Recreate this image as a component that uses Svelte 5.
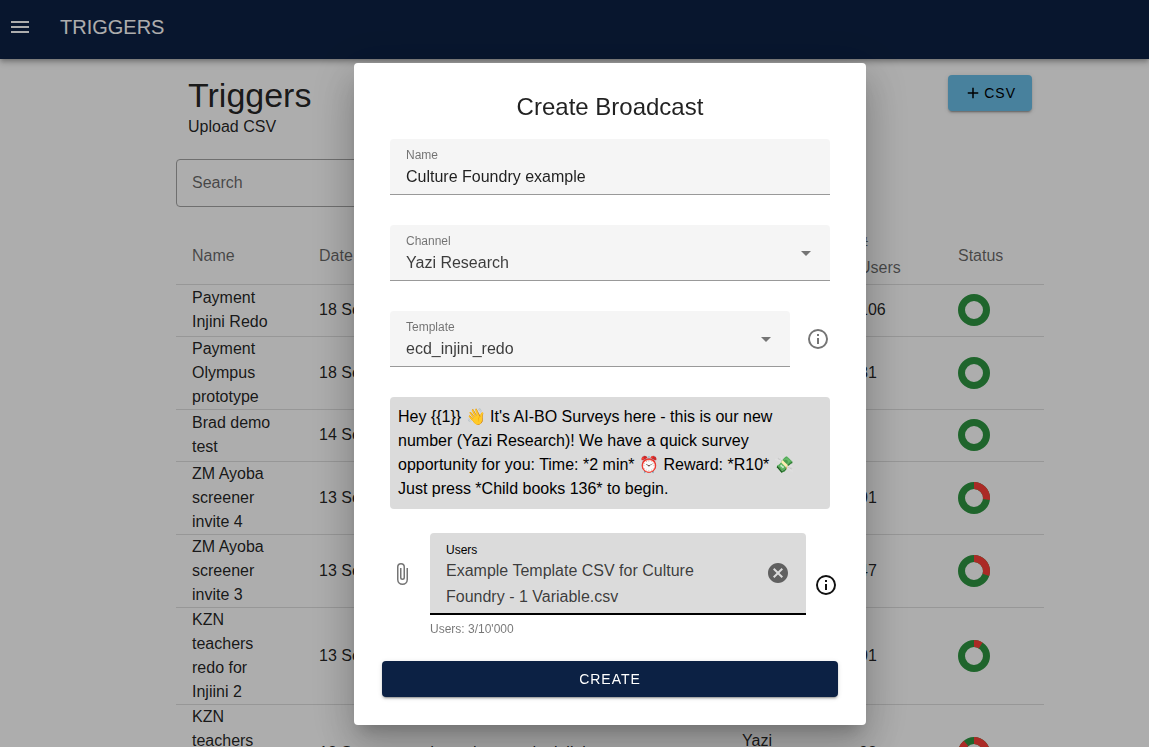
<script lang="ts">
    const icons = {
        menu: 'M3,6H21V8H3V6M3,11H21V13H3V11M3,16H21V18H3V16Z',
        plus: 'M19,13H13V19H11V13H5V11H11V5H13V11H19V13Z',
        down: 'M7,10L12,15L17,10H7Z',
        info: 'M11,9H13V7H11M12,20C7.59,20 4,16.41 4,12C4,7.59 7.59,4 12,4C16.41,4 20,7.59 20,12C20,16.41 16.41,20 12,20M12,2A10,10 0 0,0 2,12A10,10 0 0,0 12,22A10,10 0 0,0 22,12A10,10 0 0,0 12,2M11,17H13V11H11V17Z',
        clip: 'M16.5,6V17.5A4,4 0 0,1 12.5,21.5A4,4 0 0,1 8.5,17.5V5A2.5,2.5 0 0,1 11,2.5A2.5,2.5 0 0,1 13.5,5V15.5A1,1 0 0,1 12.5,16.5A1,1 0 0,1 11.5,15.5V6H10V15.5A2.5,2.5 0 0,0 12.5,18A2.5,2.5 0 0,0 15,15.5V5A4,4 0 0,0 11,1A4,4 0 0,0 7,5V17.5A5.5,5.5 0 0,0 12.5,23A5.5,5.5 0 0,0 18,17.5V6H16.5Z',
        clear: 'M12,2C17.53,2 22,6.47 22,12C22,17.53 17.53,22 12,22C6.47,22 2,17.53 2,12C2,6.47 6.47,2 12,2M15.59,7L12,10.59L8.41,7L7,8.41L10.59,12L7,15.59L8.41,17L12,13.41L15.59,17L17,15.59L13.41,12L17,8.41L15.59,7Z',
    };

    const triggers = [
        { name: 'Payment Injini Redo', date: '18 Sept', template: 'ecd_injini_redo', channel: 'Yazi', users: 106, failed: 0 },
        { name: 'Payment Olympus prototype', date: '18 Sept', template: 'olympus_payment', channel: 'Yazi', users: 31, failed: 0 },
        { name: 'Brad demo test', date: '14 Sept', template: 'demo_test', channel: 'Yazi', users: null, failed: 0 },
        { name: 'ZM Ayoba screener invite 4', date: '13 Sept', template: 'ayoba_screener', channel: 'Yazi', users: 91, failed: 27 },
        { name: 'ZM Ayoba screener invite 3', date: '13 Sept', template: 'ayoba_screener', channel: 'Yazi', users: 47, failed: 30 },
        { name: 'KZN teachers redo for Injiini 2', date: '13 Sept', template: 'ecd_teachers_redo_injini', channel: 'Yazi Research', users: 91, failed: 9 },
        { name: 'KZN teachers redo for Injiini', date: '13 Sept', template: 'ecd_teachers_redo_injini', channel: 'Yazi Research', users: 98, failed: 89 },
    ];

    let search = $state('');
    let name = $state('Culture Foundry example');
    let channel = $state('Yazi Research');
    let template = $state('ecd_injini_redo');
    let fileName = $state('Example Template CSV for Culture Foundry - 1 Variable.csv');

    const message = "Hey {{1}} 👋 It's AI-BO Surveys here - this is our new number (Yazi Research)! We have a quick survey opportunity for you: Time: *2 min* ⏰ Reward: *R10* 💸 Just press *Child books 136* to begin.";
</script>

{#snippet icon(path: string, size = 24)}
    <svg width={size} height={size} viewBox="0 0 24 24" fill="currentColor" aria-hidden="true">
        <path d={path} />
    </svg>
{/snippet}

<div class="app">
    <header class="app-bar">
        <button class="icon-btn" aria-label="Menu">{@render icon(icons.menu)}</button>
        <span class="app-title">TRIGGERS</span>
    </header>

    <main>
        <div class="page-head">
            <div>
                <h1>Triggers</h1>
                <p>Upload CSV</p>
            </div>
            <button class="btn btn-csv">{@render icon(icons.plus, 18)}CSV</button>
        </div>

        <input class="search" type="text" placeholder="Search" aria-label="Search" bind:value={search} />

        <table>
            <thead>
                <tr>
                    <th class="col-name">Name</th>
                    <th class="col-date">Date</th>
                    <th>Template</th>
                    <th class="col-channel">Channel</th>
                    <th class="col-users"># Users</th>
                    <th class="col-status">Status</th>
                </tr>
            </thead>
            <tbody>
                {#each triggers as t}
                    <tr>
                        <td class="col-name">{t.name}</td>
                        <td>{t.date}</td>
                        <td>{t.template}</td>
                        <td>{t.channel}</td>
                        <td>{t.users ?? ''}</td>
                        <td>
                            <svg class="ring" width="32" height="32" viewBox="0 0 32 32">
                                <circle class="sent" cx="16" cy="16" r="12.5" />
                                {#if t.failed}
                                    <circle
                                        class="failed"
                                        cx="16"
                                        cy="16"
                                        r="12.5"
                                        pathLength="100"
                                        stroke-dasharray="{t.failed} 100"
                                        transform="rotate(-90 16 16)"
                                    />
                                {/if}
                            </svg>
                        </td>
                    </tr>
                {/each}
            </tbody>
        </table>
    </main>

    <div class="overlay">
        <form class="dialog" role="dialog" aria-labelledby="dialog-title" onsubmit={(e) => e.preventDefault()}>
            <h2 id="dialog-title">Create Broadcast</h2>

            <div class="fields">
                <div class="field">
                    <label for="name">Name</label>
                    <input id="name" type="text" bind:value={name} />
                </div>

                <div class="field">
                    <label for="channel">Channel</label>
                    <select id="channel" bind:value={channel}>
                        <option>Yazi Research</option>
                    </select>
                    <span class="arrow">{@render icon(icons.down)}</span>
                </div>

                <div class="with-info">
                    <div class="field">
                        <label for="template">Template</label>
                        <select id="template" bind:value={template}>
                            <option>ecd_injini_redo</option>
                        </select>
                        <span class="arrow">{@render icon(icons.down)}</span>
                    </div>
                    <span class="muted">{@render icon(icons.info)}</span>
                </div>

                <p class="message">{message}</p>
            </div>

            <div class="upload">
                <span class="muted">{@render icon(icons.clip)}</span>
                <div class="file-field">
                    <label class="file-text" for="users">
                        <span class="file-label">Users</span>
                        <span class="file-name">{fileName}</span>
                    </label>
                    <input id="users" class="file-input" type="file" accept=".csv" />
                    <button class="icon-btn" type="button" aria-label="Clear" onclick={() => (fileName = '')}>
                        {@render icon(icons.clear)}
                    </button>
                </div>
                <span class="upload-info">{@render icon(icons.info)}</span>
                <small>Users: 3/10'000</small>
            </div>

            <button class="btn btn-create" type="submit">CREATE</button>
        </form>
    </div>
</div>

<style>
    :global(body) {
        margin: 0;
    }

    .app {
        /* the centred content and the dialog sit right of the middle by half of this */
        --rail: 71px;
        height: 100vh;
        overflow: hidden;
        background: #fff;
        color: rgba(0, 0, 0, 0.87);
        font-family: 'Liberation Sans', Arial, sans-serif;
        font-size: 16px;
        line-height: 24px;
    }

    .app * {
        box-sizing: border-box;
    }

    h1,
    h2,
    p {
        margin: 0;
        font-weight: 400;
    }

    svg {
        display: block;
        flex-shrink: 0;
    }

    button,
    input,
    select {
        font: inherit;
        color: inherit;
    }

    .icon-btn {
        padding: 0;
        border: 0;
        background: none;
        cursor: pointer;
    }

    .app-bar {
        display: flex;
        align-items: center;
        gap: 28px;
        height: 59px;
        padding: 0 8px 6px;
        background: #0c2144;
        color: #fff;
        box-shadow: 0 2px 4px -1px rgba(0, 0, 0, 0.2), 0 4px 5px rgba(0, 0, 0, 0.14), 0 1px 10px rgba(0, 0, 0, 0.12);
    }

    .app-title {
        font-size: 20px;
    }

    main {
        max-width: 868px;
        margin-left: calc((100% - 868px + var(--rail)) / 2);
        padding: 16px 0;
    }

    .page-head {
        display: flex;
        justify-content: space-between;
        align-items: flex-start;
        padding: 0 12px 20px;
    }

    h1 {
        font-size: 34px;
        line-height: 40px;
    }

    .btn {
        display: flex;
        align-items: center;
        justify-content: center;
        height: 36px;
        padding: 0 16px;
        border: 0;
        border-radius: 4px;
        font-size: 14px;
        letter-spacing: 1px;
        cursor: pointer;
        box-shadow: 0 3px 1px -2px rgba(0, 0, 0, 0.2), 0 2px 2px rgba(0, 0, 0, 0.14), 0 1px 5px rgba(0, 0, 0, 0.12);
    }

    .btn-csv {
        gap: 2px;
        background: #6bbfe7;
        color: #000;
    }

    .search {
        display: block;
        width: 50%;
        height: 48px;
        padding: 0 15px;
        border: 1px solid #a4a4a4;
        border-radius: 4px;
        background: none;
    }

    .search::placeholder {
        color: rgba(0, 0, 0, 0.6);
    }

    table {
        width: 100%;
        margin-top: 21px;
        border-collapse: collapse;
        table-layout: fixed;
        text-align: left;
    }

    th {
        height: 56px;
        padding: 0 16px;
        border-bottom: 1px solid #dfdfdf;
        font-weight: 400;
        color: rgba(0, 0, 0, 0.6);
    }

    td {
        height: 52px;
        padding: 0 16px;
        border-bottom: 1px solid #dfdfdf;
    }

    .col-name {
        width: 127px;
        padding-right: 28px;
    }

    .col-date {
        width: 89px;
    }

    .col-channel {
        width: 117px;
    }

    .col-users {
        width: 99px;
        padding-right: 40px;
    }

    .col-status {
        width: 102px;
    }

    .ring circle {
        fill: none;
        stroke-width: 7;
    }

    .ring .sent {
        stroke: #2f9642;
    }

    .ring .failed {
        stroke: #fd3f39;
    }

    .overlay {
        position: fixed;
        inset: 0;
        display: flex;
        justify-content: center;
        align-items: flex-start;
        padding: 63px 0 0 var(--rail);
        background: rgba(0, 0, 0, 0.32);
    }

    .dialog {
        width: 100%;
        max-width: 512px;
        padding: 28px;
        border-radius: 4px;
        background: #fff;
        box-shadow: 0 11px 15px -7px rgba(0, 0, 0, 0.2), 0 24px 38px 3px rgba(0, 0, 0, 0.14), 0 9px 46px 8px rgba(0, 0, 0, 0.12);
    }

    h2 {
        font-size: 24px;
        line-height: 32px;
        text-align: center;
    }

    .fields {
        display: flex;
        flex-direction: column;
        gap: 30px;
        padding: 16px 8px 24px;
    }

    .field {
        display: grid;
        grid-template: 24px 31px / 1fr 48px;
        flex: 1;
        border-bottom: 1px solid #999;
        border-radius: 4px 4px 0 0;
        background: #f5f5f5;
    }

    .field label {
        grid-area: 1 / 1;
        padding: 8px 16px 0;
        font-size: 12px;
        line-height: 16px;
        color: rgba(0, 0, 0, 0.54);
    }

    .field input,
    .field select {
        grid-area: 2 / 1 / 3 / 3;
        width: 100%;
        height: 28px;
        padding: 0 16px;
        border: 0;
        outline: 0;
        background: none;
        appearance: none;
    }

    .field select {
        color: rgba(0, 0, 0, 0.76);
    }

    .arrow {
        grid-area: 1 / 2 / 3 / 3;
        align-self: center;
        justify-self: center;
        color: #757575;
        pointer-events: none;
    }

    .with-info {
        display: flex;
        align-items: center;
        gap: 16px;
    }

    .muted {
        color: #757575;
    }

    .message {
        padding: 8px;
        border-radius: 4px;
        background: #dbdbdb;
        color: #000;
    }

    .upload {
        display: grid;
        grid-template-columns: 24px 1fr 24px;
        column-gap: 16px;
        align-items: center;
        padding-left: 8px;
    }

    .file-field {
        display: flex;
        align-items: center;
        gap: 16px;
        margin-right: -8px;
        padding: 0 16px;
        border-bottom: 2px solid #000;
        border-radius: 4px 4px 0 0;
        background: #dbdbdb;
        color: #606060;
    }

    .file-text {
        display: flex;
        flex-direction: column;
        flex: 1;
        padding: 9px 0 3px;
    }

    .file-label {
        font-size: 12px;
        line-height: 16px;
        color: #000;
    }

    .file-name {
        line-height: 26px;
        color: rgba(0, 0, 0, 0.74);
    }

    .file-input {
        position: absolute;
        width: 1px;
        height: 1px;
        opacity: 0;
    }

    .upload-info {
        grid-area: 1 / 3 / 3 / 4;
        color: #111;
    }

    small {
        grid-column: 2;
        padding-top: 6px;
        font-size: 12px;
        line-height: 16px;
        color: rgba(0, 0, 0, 0.54);
    }

    .btn-create {
        width: 100%;
        margin-top: 24px;
        background: #0c2144;
        color: #fff;
    }
</style>
